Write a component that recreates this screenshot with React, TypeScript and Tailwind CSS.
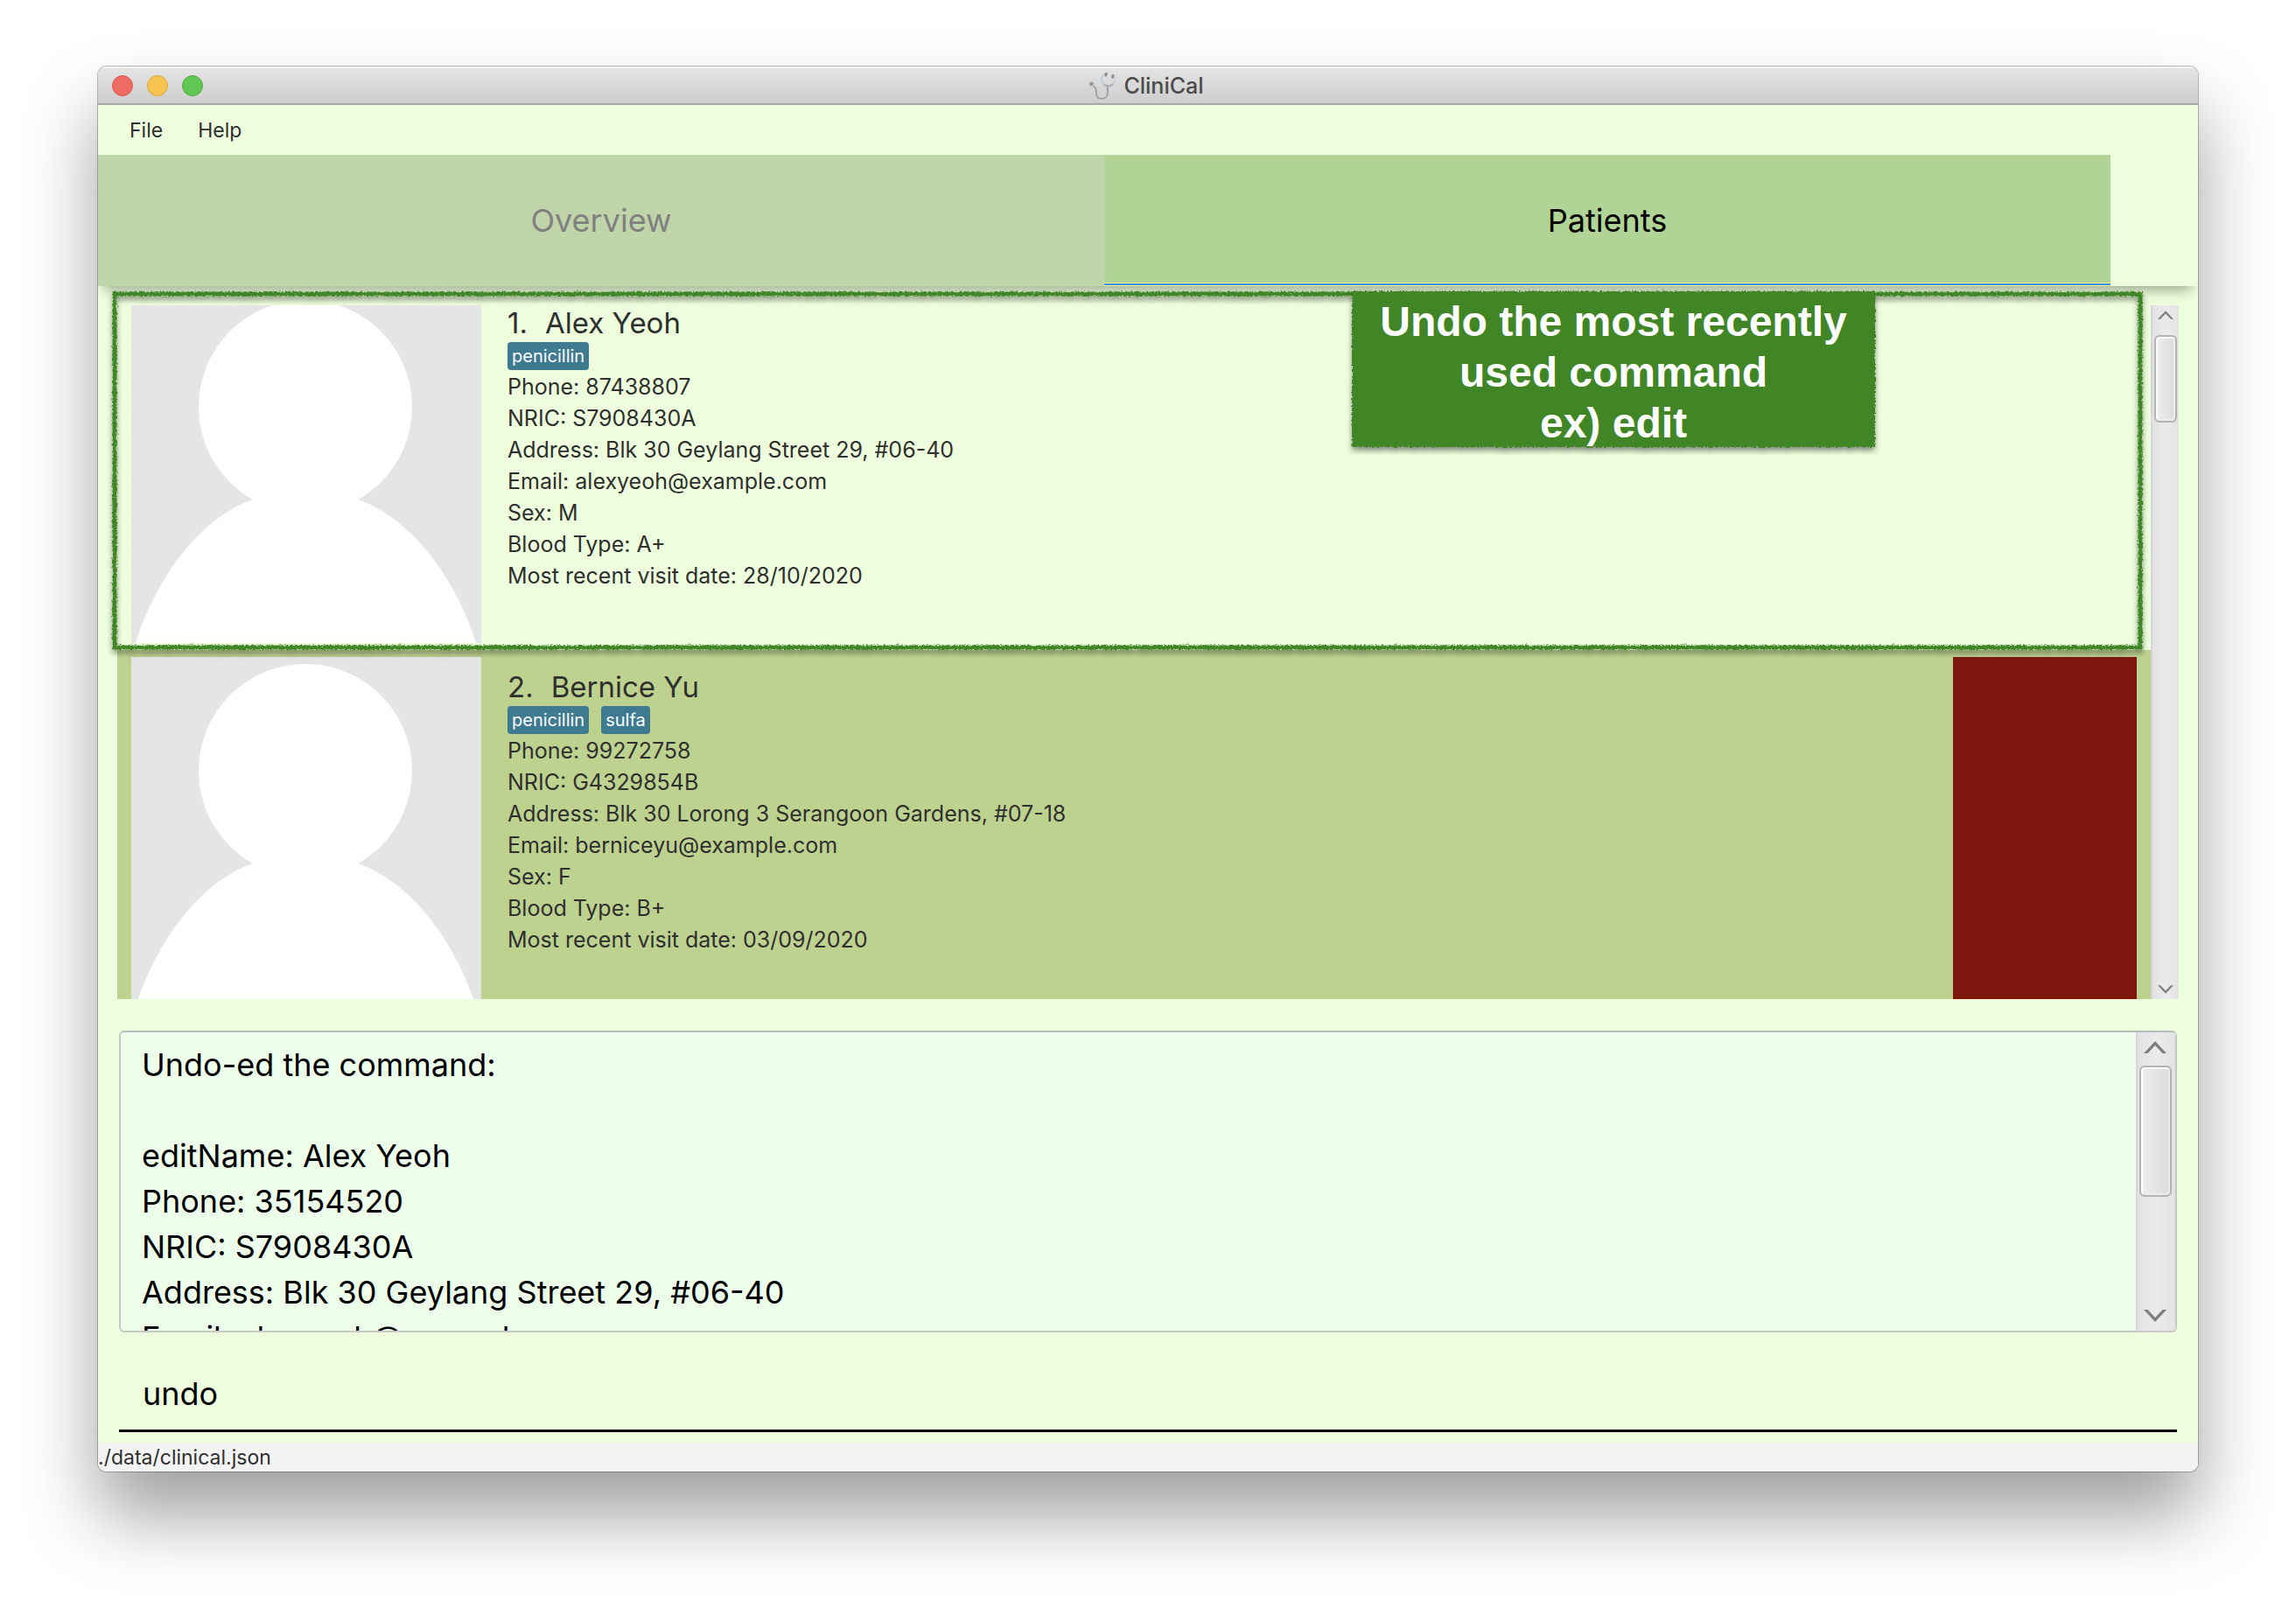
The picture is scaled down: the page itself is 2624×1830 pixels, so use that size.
import React from "react";

type Patient = {
  index: number;
  name: string;
  tags: string[];
  details: string[];
  rowClass: string;
  flagged: boolean;
};

const patients: Patient[] = [
  {
    index: 1,
    name: "Alex Yeoh",
    tags: ["penicillin"],
    details: [
      "Phone: 87438807",
      "NRIC: S7908430A",
      "Address: Blk 30 Geylang Street 29, #06-40",
      "Email: alexyeoh@example.com",
      "Sex: M",
      "Blood Type: A+",
      "Most recent visit date: 28/10/2020",
    ],
    rowClass: "bg-[#edffdd]",
    flagged: false,
  },
  {
    index: 2,
    name: "Bernice Yu",
    tags: ["penicillin", "sulfa"],
    details: [
      "Phone: 99272758",
      "NRIC: G4329854B",
      "Address: Blk 30 Lorong 3 Serangoon Gardens, #07-18",
      "Email: berniceyu@example.com",
      "Sex: F",
      "Blood Type: B+",
      "Most recent visit date: 03/09/2020",
    ],
    rowClass: "bg-[#bed290]",
    flagged: true,
  },
];

const resultText = [
  "Undo-ed the command:",
  "",
  "editName: Alex Yeoh",
  "Phone: 35154520",
  "NRIC: S7908430A",
  "Address: Blk 30 Geylang Street 29, #06-40",
  "Email: alexyeoh@example.com",
  "Sex: M",
  "Blood Type: A+",
].join("\n");

function Stethoscope() {
  return (
    <svg viewBox="0 0 32 34" className="h-[34px] w-8" fill="none" aria-hidden="true">
      <path d="M18.500 3.500C14.500 6 14 11.500 17 15C20 18 26 17.800 28.500 14.500C30.500 11.500 30.500 7.500 28.500 5" stroke="#c3cbd3" strokeWidth="2" />
      <path d="M17.500 15.500C20 18 25.500 18 28 15" stroke="#a9adb1" strokeWidth="1.800" />
      <path d="M21.800 17.500V25C21.800 29 19 31.800 15 31.800C10.500 31.800 8.800 29 8.800 25.500C8.800 21 8.500 19 4.500 16.500" stroke="#9b9d9f" strokeWidth="1.800" />
      <circle cx="3.500" cy="15" r="3.500" fill="#c3cbd3" />
      <circle cx="3.500" cy="15" r="1.900" fill="#8b8e92" />
      <path d="M19.600 5.200L20.400 3.200M27.200 7.400L28 5.400" stroke="#8c8f92" strokeWidth="2.800" strokeLinecap="round" />
    </svg>
  );
}

function Avatar() {
  return (
    <svg viewBox="0 0 400 400" className="size-[400px] shrink-0 bg-[#e5e5e5]" role="img" aria-label="Patient photo">
      <circle cx="199" cy="130" r="122" fill="#fff" />
      <path d="M139 236C80 256 28 325 5 400H394C371 325 318 256 259 236Z" fill="#fff" />
    </svg>
  );
}

function Chevron({ up, className }: { up?: boolean; className: string }) {
  return (
    <svg viewBox="0 0 26 14" className={className} fill="#7f7f7f" aria-hidden="true">
      {up ? <path d="M0 14L13 0L26 14H21.500L13 5L4.500 14Z" /> : <path d="M0 0L13 14L26 0H21.500L13 9L4.500 0Z" />}
    </svg>
  );
}

const trackClass = "flex shrink-0 flex-col border-l-2 border-[#d6d6d6] bg-linear-to-r from-[#e2e2e2] via-[#ebebeb] to-[#e3e3e3]";
const thumbClass =
  "rounded-md border-2 border-[#b3b3b3] bg-linear-to-r from-[#eeeeee] to-[#dcdcdc] shadow-[inset_2px_2px_0_#ffffff,inset_-2px_-2px_0_#ececec]";

function CrayonFilter() {
  return (
    <svg className="absolute size-0" aria-hidden="true">
      <defs>
        <filter id="crayon" x="-2%" y="-5%" width="104%" height="110%">
          <feTurbulence type="fractalNoise" baseFrequency="0.45" numOctaves="2" seed="4" result="noise" />
          <feDisplacementMap in="SourceGraphic" in2="noise" scale="5" xChannelSelector="R" yChannelSelector="G" result="rough" />
          <feDropShadow in="rough" dx="0" dy="4" stdDeviation="3" floodColor="#000000" floodOpacity="0.45" />
        </filter>
      </defs>
    </svg>
  );
}

function PatientCard({ patient }: { patient: Patient }) {
  return (
    <li className={`flex h-[416px] shrink-0 items-start px-4 py-2 ${patient.rowClass}`}>
      <Avatar />
      <div className="min-w-0 flex-1 pt-3 pl-[30px] text-[#2f2f2f]">
        <h2 className="flex gap-5 text-[33px] leading-[44px]">
          <span>{patient.index}.</span>
          <span>{patient.name}</span>
        </h2>
        <ul className="flex gap-[14px] pb-px">
          {patient.tags.map((tag) => (
            <li key={tag} className="h-8 rounded bg-[#3e7b91] px-[5px] text-[20px] leading-8 text-white">
              {tag}
            </li>
          ))}
        </ul>
        {patient.details.map((line) => (
          <p key={line} className="text-[25px] leading-9">
            {line}
          </p>
        ))}
      </div>
      {patient.flagged && <div className="h-full w-[210px] shrink-0 bg-[#7d170e]" />}
    </li>
  );
}

export default function App() {
  return (
    <div className="flex h-screen flex-col overflow-hidden bg-white px-28 pt-[76px] pb-[148px] font-['Inter',sans-serif]">
      <CrayonFilter />
      <div className="flex min-h-0 flex-1 flex-col rounded-[10px] shadow-[0_0_0_1px_rgba(0,0,0,0.26),0_50px_84px_rgba(0,0,0,0.38)]">
        <div className="flex min-h-0 flex-1 flex-col overflow-hidden rounded-[10px] bg-[#edffdd]">
          <header className="grid h-11 shrink-0 grid-cols-[1fr_auto_1fr] items-center border-t-2 border-b-2 border-t-[#f4f4f4] border-b-[#a8a8a8] bg-linear-to-b from-[#e4e4e4] to-[#cdcdcd] px-4">
            <div className="flex gap-4">
              <button aria-label="Close" className="size-6 rounded-full border border-[#d9574d] bg-[#ed6b60]" />
              <button aria-label="Minimize" className="size-6 rounded-full border border-[#dba33c] bg-[#f6c350]" />
              <button aria-label="Zoom" className="size-6 rounded-full border border-[#4fab40] bg-[#62c655]" />
            </div>
            <div className="flex items-center gap-2 pr-1">
              <Stethoscope />
              <h1 className="text-[25px] leading-8 font-medium text-[#4b4b4b]">CliniCal</h1>
            </div>
          </header>

          <nav className="flex h-[57px] shrink-0 items-center gap-10 pt-px pl-9 text-[23px] text-[#2f2f2f]">
            <button>File</button>
            <button>Help</button>
          </nav>

          <div role="tablist" className="relative z-10 flex h-[150px] shrink-0 bg-[#edffdd] pr-[100px] text-[36px] shadow-[0_12px_14px_-8px_rgba(0,0,0,0.36)]">
            <button role="tab" aria-selected="false" className="flex-1 bg-[#c0d4aa] text-[#808080]">
              Overview
            </button>
            <button role="tab" aria-selected="true" className="flex flex-1 flex-col bg-[#afd495] text-black">
              <span className="flex w-full flex-1 items-center justify-center pt-1">Patients</span>
              <span className="h-1 w-full border-y border-[#f8f08a] bg-[#3d8ff0]" />
            </button>
          </div>

          <main className="relative flex min-h-0 flex-1 pt-[22px] pr-[22px] pl-[22px]">
            <div className="min-w-0 flex-1 overflow-hidden">
              <ul className="-mt-[22px] flex flex-col">
                {patients.map((patient) => (
                  <PatientCard key={patient.index} patient={patient} />
                ))}
              </ul>
            </div>
            <div className={`${trackClass} w-8 items-center justify-between py-[6px]`}>
              <div className="flex flex-col items-center gap-[18px]">
                <Chevron up className="h-[10px] w-[18px]" />
                <div className={`${thumbClass} h-[100px] w-[26px]`} />
              </div>
              <Chevron className="h-[10px] w-[18px]" />
            </div>

            <svg className="absolute top-[6px] left-4 z-20 h-[410px] w-[calc(100%-79px)] overflow-visible" aria-hidden="true">
              <rect x="3" y="3" width="100%" height="100%" className="h-[404px] w-[calc(100%-6px)]" fill="none" stroke="#3f8527" strokeWidth="5" filter="url(#crayon)" />
            </svg>
            <div className="absolute top-[6px] right-[369px] z-20 w-[598px] text-center font-['Liberation_Sans',sans-serif] text-[48px] leading-[58px] font-bold text-white">
              <svg className="absolute inset-0 size-full overflow-visible" aria-hidden="true">
                <rect width="100%" height="100%" fill="#3f8527" filter="url(#crayon)" />
              </svg>
              <p className="relative h-[178px] pt-[6px]">
                Undo the most recently
                <br />
                used command
                <br />
                ex) edit
              </p>
            </div>
          </main>

          <section className="mx-6 mt-9 flex h-[345px] shrink-0 overflow-hidden rounded-md border-2 border-[#c8c8c8] border-t-[#b9b9b9] bg-[#edffeb]">
            <textarea
              readOnly
              aria-label="Result"
              defaultValue={resultText}
              className="min-w-0 flex-1 resize-none overflow-hidden bg-transparent py-[11px] pl-6 text-[36px] leading-[52px] text-black outline-none"
            />
            <div className={`${trackClass} w-[45px] items-center justify-between py-[10px] pr-[3px]`}>
              <div className="flex flex-col items-center gap-[14px]">
                <Chevron up className="h-[14px] w-[26px]" />
                <div className={`${thumbClass} h-[150px] w-[37px]`} />
              </div>
              <Chevron className="h-[14px] w-[26px]" />
            </div>
          </section>

          <input
            aria-label="Command"
            defaultValue="undo"
            className="mx-6 mt-7 h-[86px] shrink-0 border-b-[3px] border-black bg-transparent px-[27px] text-[36px] text-black outline-none"
          />

          <footer className="mt-3 h-[33px] shrink-0 bg-[#f3f3f3] text-[23px] leading-[34px] text-[#2f2f2f]">./data/clinical.json</footer>
        </div>
      </div>
    </div>
  );
}
